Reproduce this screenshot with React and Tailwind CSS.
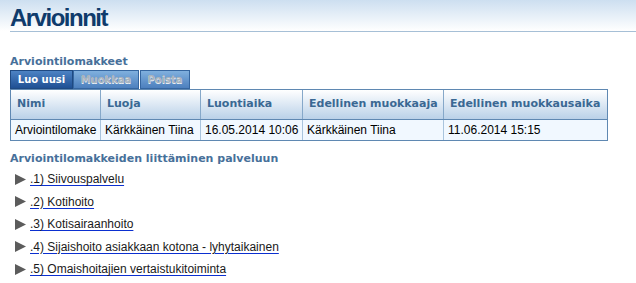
import React from "react";

const headers = ["Nimi", "Luoja", "Luontiaika", "Edellinen muokkaaja", "Edellinen muokkausaika"];
const row = ["Arviointilomake", "Kärkkäinen Tiina", "16.05.2014 10:06", "Kärkkäinen Tiina", "11.06.2014 15:15"];
const items = [
  ".1) Siivouspalvelu",
  ".2) Kotihoito",
  ".3) Kotisairaanhoito",
  ".4) Sijaishoito asiakkaan kotona - lyhytaikainen",
  ".5) Omaishoitajien vertaistukitoiminta",
];

function Triangle() {
  return (
    <svg width="11" height="11" viewBox="0 0 11 11" className="shrink-0">
      <polygon points="0,0 11,5.5 0,11" fill="#5c5c5c" />
    </svg>
  );
}

export default function App() {
  const verdana = "font-['DejaVu_Sans',Verdana,sans-serif]";
  return (
    <div className="w-[636px] h-[283px] overflow-hidden bg-white font-['Liberation_Sans',Arial,sans-serif] text-[12px] text-[#111]">
      <div className="bg-gradient-to-b from-[#cddff0] to-white pt-[4px]">
        <h1 className="ml-[10px] text-[24px] leading-[27px] font-bold tracking-[-1.5px] text-[#0f3b6c]">
          Arvioinnit
        </h1>
      </div>
      <div className="ml-[10px] h-[1px] bg-[#a6bfd6]" />

      <div className="px-[10px]">
        <div className={`${verdana} mt-[23px] text-[11px] leading-[13px] font-bold text-[#47709a]`}>
          Arviointilomakkeet
        </div>

        <div className={`${verdana} mt-[2px] flex h-[19px] text-[10px] font-bold`}>
          <div className="w-[63px] flex items-center justify-center border border-[#1f4a82] bg-gradient-to-b from-[#4d83c4] to-[#1f5094] text-white">
            Luo uusi
          </div>
          <div className="w-[66px] flex items-center justify-center border border-[#3566a0] bg-gradient-to-b from-[#80b0de] to-[#4d80be] text-[#a9b3bd] [text-shadow:0_1px_0_#e8eef4]">
            Muokkaa
          </div>
          <div className="ml-[1px] w-[50px] flex items-center justify-center border border-[#3566a0] bg-gradient-to-b from-[#80b0de] to-[#4d80be] text-[#a9b3bd] [text-shadow:0_1px_0_#e8eef4]">
            Poista
          </div>
        </div>

        <div className="w-[598px] border border-[#5f88b2]">
          <div className="grid grid-cols-[89px_100px_102px_141px_164px] h-[30px] border-b border-[#5f88b2] bg-gradient-to-b from-white to-[#bad1e8]">
            {headers.map((h, i) => (
              <div
                key={h}
                className={`${verdana} flex items-center pl-[6px] text-[11px] font-bold text-[#3a6893] ${i > 0 ? "border-l border-[#86a8c9]" : ""}`}
              >
                {h}
              </div>
            ))}
          </div>
          <div className="grid grid-cols-[89px_100px_102px_141px_164px] h-[20px] bg-[#f1f8ff]">
            {row.map((c, i) => (
              <div
                key={i}
                className={`flex items-center pl-[4px] text-[12px] text-black whitespace-nowrap ${i > 0 ? "border-l border-[#a9c4dd]" : ""}`}
              >
                {c}
              </div>
            ))}
          </div>
        </div>

        <div className={`${verdana} mt-[11px] text-[11px] leading-[13px] font-bold text-[#47709a]`}>
          Arviointilomakkeiden liittäminen palveluun
        </div>

        <ul className="mt-[3px]">
          {items.map((t) => (
            <li key={t} className="flex items-center h-[22.5px] pl-[5px] gap-[4px]">
              <Triangle />
              <a href="#" className="text-[12px] text-[#1a1a1a] underline decoration-[#0b2fd0] underline-offset-[2px]">
                {t}
              </a>
            </li>
          ))}
        </ul>
      </div>
    </div>
  );
}
